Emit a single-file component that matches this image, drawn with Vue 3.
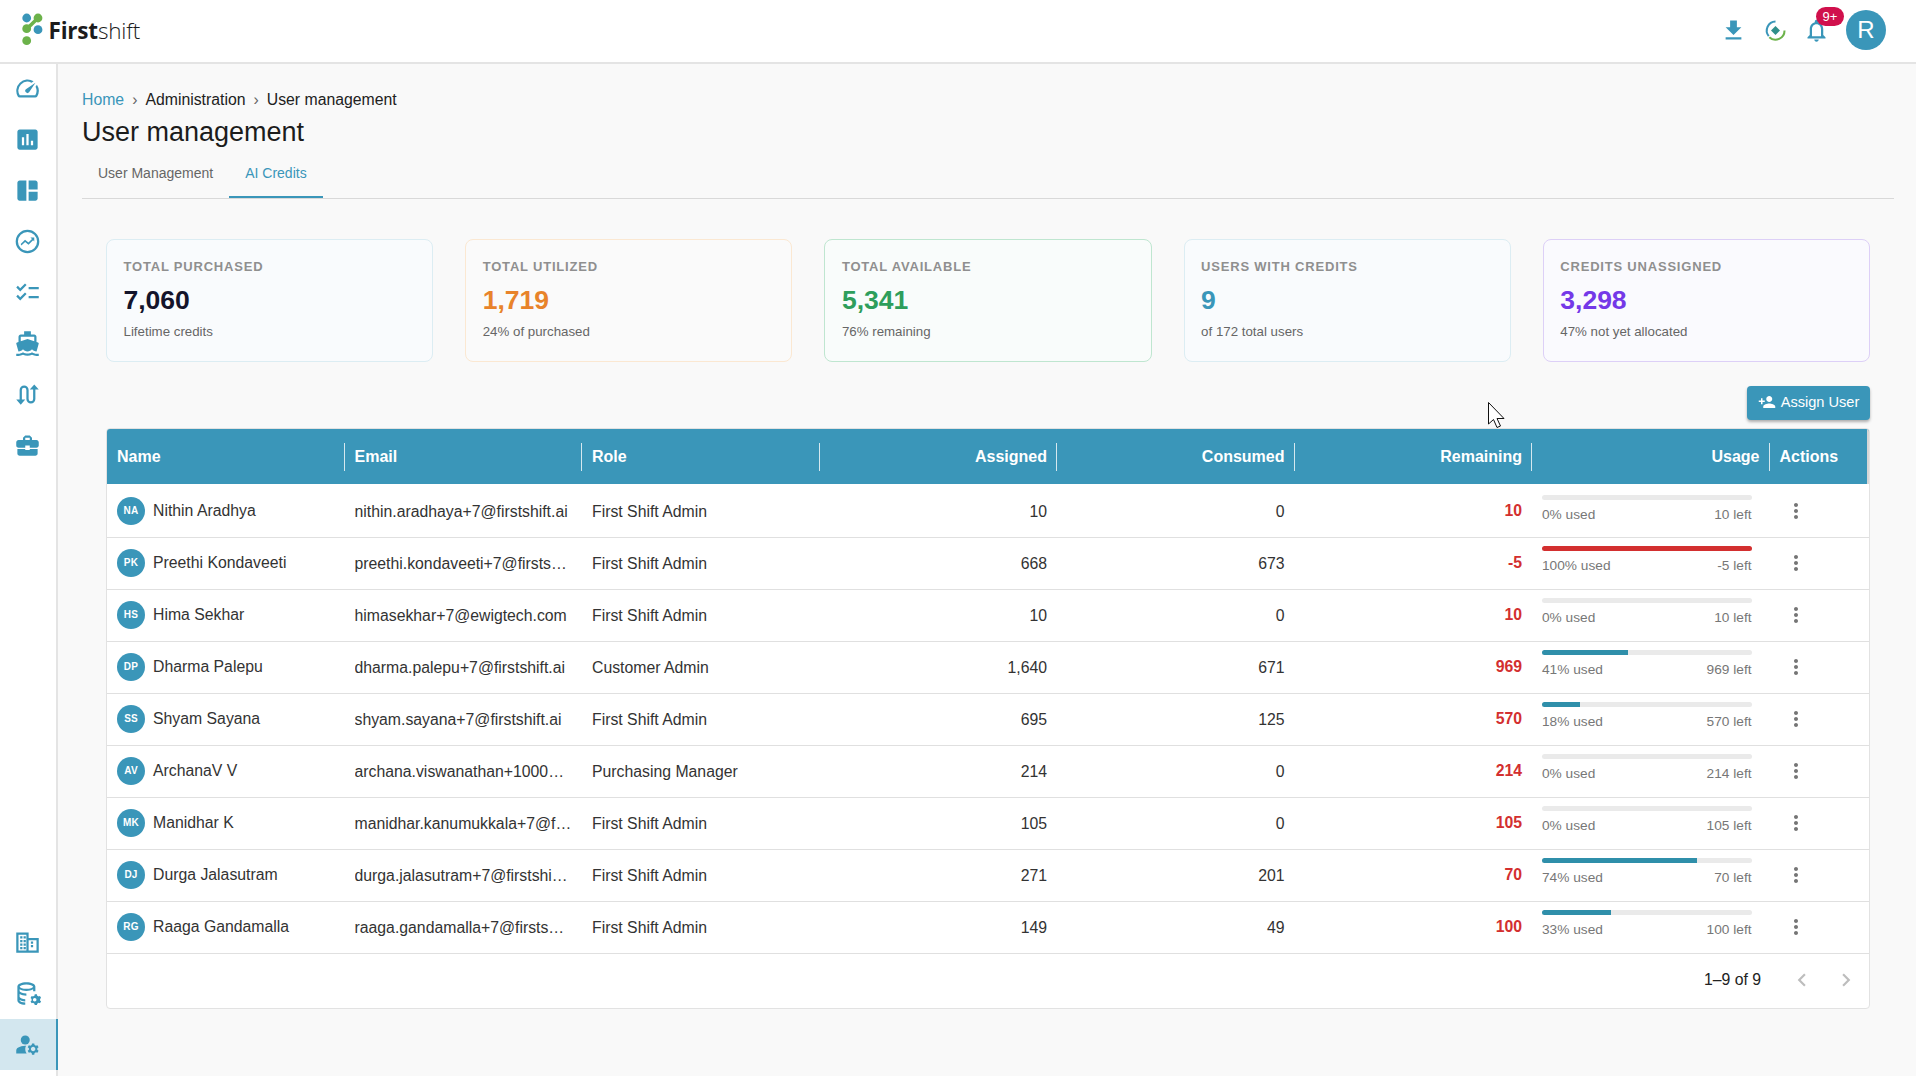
<script setup>
const tabs = ['User Management', 'AI Credits']
const cards = [
  { label: 'Total Purchased', value: '7,060', sub: 'Lifetime credits', tone: 'ink' },
  { label: 'Total Utilized', value: '1,719', sub: '24% of purchased', tone: 'orange' },
  { label: 'Total Available', value: '5,341', sub: '76% remaining', tone: 'green' },
  { label: 'Users with Credits', value: '9', sub: 'of 172 total users', tone: 'blue' },
  { label: 'Credits Unassigned', value: '3,298', sub: '47% not yet allocated', tone: 'purple' },
]
const rows = [
  { i: 'NA', name: 'Nithin Aradhya', email: 'nithin.aradhaya+7@firstshift.ai', role: 'First Shift Admin', assigned: '10', consumed: '0', remaining: '10', pct: 0 },
  { i: 'PK', name: 'Preethi Kondaveeti', email: 'preethi.kondaveeti+7@firstshift.ai', role: 'First Shift Admin', assigned: '668', consumed: '673', remaining: '-5', pct: 100 },
  { i: 'HS', name: 'Hima Sekhar', email: 'himasekhar+7@ewigtech.com', role: 'First Shift Admin', assigned: '10', consumed: '0', remaining: '10', pct: 0 },
  { i: 'DP', name: 'Dharma Palepu', email: 'dharma.palepu+7@firstshift.ai', role: 'Customer Admin', assigned: '1,640', consumed: '671', remaining: '969', pct: 41 },
  { i: 'SS', name: 'Shyam Sayana', email: 'shyam.sayana+7@firstshift.ai', role: 'First Shift Admin', assigned: '695', consumed: '125', remaining: '570', pct: 18 },
  { i: 'AV', name: 'ArchanaV V', email: 'archana.viswanathan+1000@firstshift.ai', role: 'Purchasing Manager', assigned: '214', consumed: '0', remaining: '214', pct: 0 },
  { i: 'MK', name: 'Manidhar K', email: 'manidhar.kanumukkala+7@firstshift.ai', role: 'First Shift Admin', assigned: '105', consumed: '0', remaining: '105', pct: 0 },
  { i: 'DJ', name: 'Durga Jalasutram', email: 'durga.jalasutram+7@firstshift.ai', role: 'First Shift Admin', assigned: '271', consumed: '201', remaining: '70', pct: 74 },
  { i: 'RG', name: 'Raaga Gandamalla', email: 'raaga.gandamalla+7@firstshift.ai', role: 'First Shift Admin', assigned: '149', consumed: '49', remaining: '100', pct: 33 },
]
const cols = [
  { t: 'Name' }, { t: 'Email' }, { t: 'Role' },
  { t: 'Assigned', r: true }, { t: 'Consumed', r: true }, { t: 'Remaining', r: true }, { t: 'Usage', r: true }, { t: 'Actions' },
]
</script>

<template>
  <div class="page">
    <header class="top">
      <div class="brand">
        <svg width="24" height="34" viewBox="0 0 24 34">
          <path d="M17 5 L6 15.700" fill="none" stroke="#6cb24a" stroke-width="3.600"/>
          <circle cx="5.700" cy="5" r="4.400" fill="#3a96b9"/>
          <circle cx="17" cy="5" r="4.400" fill="#6cb24a"/>
          <circle cx="5.700" cy="15.700" r="4.400" fill="#6cb24a"/>
          <circle cx="17" cy="16.700" r="4.400" fill="#3a96b9"/>
          <circle cx="5.700" cy="27.700" r="4.400" fill="#6cb24a"/>
        </svg>
        <span class="word"><b>First</b><span>shift</span></span>
      </div>
      <div class="tools">
        <svg class="t-i dl" viewBox="0 0 24 24"><path fill="#3a96b9" d="M19 9h-4V3H9v6H5l7 7zM5 18v2h14v-2z"/></svg>
        <svg class="t-i sw" viewBox="0 0 24 24">
          <path d="M12 4a8 8 0 0 0-6 13" fill="none" stroke="#3a96b9" stroke-width="1.800"/>
          <path d="M6.500 18a8 8 0 0 0 13.500-6" fill="none" stroke="#6cb24a" stroke-width="1.800"/>
          <path d="M12 8l4 4-4 4-4-4z" fill="#2f8f8a"/>
        </svg>
        <div class="bell">
          <svg viewBox="0 0 24 24"><path fill="#3a96b9" d="M12 22c1.100 0 2-.9 2-2h-4c0 1.100.9 2 2 2m6-6v-5c0-3.070-1.630-5.640-4.500-6.320V4c0-.83-.67-1.500-1.500-1.500s-1.500.67-1.500 1.500v.68C7.640 5.360 6 7.920 6 11v5l-2 2v1h16v-1zm-2 1H8v-6c0-2.480 1.510-4.500 4-4.500s4 2.020 4 4.500z"/></svg>
          <span class="badge">9+</span>
        </div>
        <div class="me">R</div>
      </div>
    </header>

    <div class="body">
      <nav class="side">
        <div class="group">
          <div class="nav"><svg viewBox="0 0 24 24"><path d="M20.380 8.570l-1.230 1.850a8 8 0 0 1-.22 7.580H5.070A8 8 0 0 1 15.580 6.850l1.850-1.230A10 10 0 0 0 3.350 19a2 2 0 0 0 1.720 1h13.850a2 2 0 0 0 1.740-1 10 10 0 0 0-.27-10.440zm-9.790 6.840a2 2 0 0 0 2.830 0l5.660-8.490-8.490 5.660a2 2 0 0 0 0 2.830z"/></svg></div>
          <div class="nav"><svg viewBox="0 0 24 24"><path d="M19 3H5c-1.100 0-2 .9-2 2v14c0 1.100.9 2 2 2h14c1.100 0 2-.9 2-2V5c0-1.100-.9-2-2-2M9 17H7v-7h2zm4 0h-2V7h2zm4 0h-2v-4h2z"/></svg></div>
          <div class="nav"><svg viewBox="0 0 24 24"><path d="M3 5v14c0 1.100.9 2 2 2h6V3H5c-1.100 0-2 .9-2 2m10-2v8h8V5c0-1.100-.9-2-2-2zm0 18h6c1.100 0 2-.9 2-2v-6h-8z"/></svg></div>
          <div class="nav"><svg viewBox="0 0 24 24"><path d="M12 1.500a10.500 10.500 0 1 0 0 21 10.500 10.500 0 0 0 0-21m0 19a8.500 8.500 0 1 1 0-17 8.500 8.500 0 0 1 0 17"/><path d="M6.500 15.500 6 14.200l3.800-3.700 3 2.400L16 9.800l-1.400-1.300H18V12l-1-1.200-4.100 4-3-2.400z"/></svg></div>
          <div class="nav"><svg viewBox="0 0 24 24"><path d="M22 7h-9v2h9zm0 8h-9v2h9zM5.540 11 2 7.460l1.410-1.410 2.120 2.120 4.240-4.240 1.410 1.410zm0 8L2 15.460l1.410-1.410 2.120 2.120 4.240-4.240 1.410 1.410z"/></svg></div>
          <div class="nav"><svg viewBox="0 0 24 24"><path d="M20 21c-1.390 0-2.780-.47-4-1.320-2.440 1.710-5.560 1.710-8 0C6.780 20.530 5.390 21 4 21H2v2h2c1.380 0 2.740-.35 4-.99 2.520 1.290 5.480 1.290 8 0 1.260.65 2.620.99 4 .99h2v-2zM3.950 19H4c1.600 0 3.020-.88 4-2 .98 1.120 2.400 2 4 2s3.020-.88 4-2c.98 1.120 2.400 2 4 2h.05l1.890-6.680c.08-.26.06-.54-.06-.78s-.34-.42-.6-.5L20 10.620V6c0-1.100-.9-2-2-2h-3V1H9v3H6c-1.100 0-2 .9-2 2v4.620l-1.290.42c-.26.08-.48.26-.6.5s-.15.52-.06.78zM6 6h12v3.970L12 8 6 9.970z"/></svg></div>
          <div class="nav"><svg viewBox="0 0 24 24"><path d="M6 21 2 16.500H5V8a4 4 0 0 1 8 0v8a2 2 0 0 0 4 0V7.500h-3L18 3l4 4.500H19V16a4 4 0 0 1-8 0V8a2 2 0 0 0-4 0v8.500h3z"/></svg></div>
          <div class="nav"><svg viewBox="0 0 24 24"><path d="M10 16v-1H3.010L3 19c0 1.110.89 2 2 2h14c1.110 0 2-.89 2-2v-4h-7v1zm10-9h-4.010V5l-2-2h-4l-2 2v2H4c-1.100 0-2 .9-2 2v3c0 1.110.89 2 2 2h6v-2h4v2h6c1.100 0 2-.9 2-2V9c0-1.100-.9-2-2-2m-6 0h-4V5h4z"/></svg></div>
        </div>
        <div class="group">
          <div class="nav"><svg viewBox="0 0 24 24"><path d="M2 3h11v5h9v13H2zM4 5v14h7V5zm9 5v9h7v-9zM5.500 6.500h2v2h-2zm3 0h2v2h-2zm-3 3.200h2v2h-2zm3 0h2v2h-2zm-3 3.200h2v2h-2zm3 0h2v2h-2zm-3 3.100h2v2h-2zm3 0h2v2h-2zm6.500-5h2v2h-2zm0 3.200h2v2h-2z"/></svg></div>
          <div class="nav"><svg viewBox="0 0 24 24"><path d="M11 2c4.400 0 8 1.600 8 3.800V10h-2V8.300C15.400 9.300 13.200 9.800 11 9.800S6.600 9.300 5 8.300V10c.5 1.100 3 2 6 2v2c-2.200 0-4.400-.5-6-1.500V15c.5 1.100 2.600 2 5 2v2c-2 0-3.800-.4-5-1.200v.4c.4 1 2.500 1.800 5 1.800v2c-4.200 0-7-1.600-7-4V5.800C3 3.600 6.600 2 11 2m0 2C7.700 4 5.300 5 5 5.900 5.300 6.800 7.700 7.800 11 7.800s5.700-1 6-1.900C16.700 5 14.300 4 11 4"/><path d="M23.200 17.500c0-.3 0-.5-.1-.7l1-.8-1-1.700-1.200.4c-.4-.3-.8-.6-1.300-.7l-.2-1.300h-2l-.2 1.300c-.5.1-.9.4-1.300.7l-1.200-.4-1 1.700 1 .8c-.1.200-.1.400-.1.700s0 .5.100.7l-1 .8 1 1.700 1.200-.4c.4.300.8.600 1.300.7l.2 1.300h2l.2-1.300c.5-.1.900-.4 1.300-.7l1.200.4 1-1.700-1-.8c.1-.2.1-.4.100-.7m-4.800 1.600a1.600 1.600 0 1 1 0-3.200 1.600 1.600 0 0 1 0 3.200"/></svg></div>
          <div class="nav on"><svg viewBox="0 0 24 24"><circle cx="10" cy="8" r="4"/><path d="M10.670 13.020C10.450 13.010 10.230 13 10 13c-2.420 0-4.680.67-6.610 1.820C2.510 15.340 2 16.320 2 17.350V20h9.260c-.79-1.130-1.260-2.510-1.260-4 0-1.070.25-2.070.67-2.980M20.750 16c0-.22-.03-.42-.06-.63l1.140-1.010-1-1.730-1.450.49c-.32-.27-.68-.48-1.080-.63L18 11h-2l-.3 1.490c-.4.150-.76.360-1.080.63l-1.450-.49-1 1.730 1.140 1.010c-.03.210-.06.410-.06.630s.03.420.06.630l-1.140 1.010 1 1.730 1.450-.49c.32.270.68.480 1.080.63L16 21h2l.3-1.490c.4-.15.760-.36 1.080-.63l1.450.49 1-1.730-1.140-1.010c.03-.21.06-.41.06-.63M17 18c-1.100 0-2-.9-2-2s.9-2 2-2 2 .9 2 2-.9 2-2 2"/></svg></div>
        </div>
      </nav>

      <main class="main">
        <div class="crumbs">
          <span class="link">Home</span><i>›</i><span>Administration</span><i>›</i><span>User management</span>
        </div>
        <h1>User management</h1>
        <div class="tabs">
          <div v-for="(t, n) in tabs" :key="t" class="tab" :class="{ sel: n === 1 }">{{ t }}</div>
        </div>

        <section class="panel">
          <div class="cards">
            <div v-for="c in cards" :key="c.label" class="card" :class="c.tone">
              <div class="lab">{{ c.label }}</div>
              <div class="val">{{ c.value }}</div>
              <div class="sub">{{ c.sub }}</div>
            </div>
          </div>

          <div class="bar">
            <button class="assign">
              <svg width="18" height="18" viewBox="0 0 24 24"><path fill="#fff" d="M15 12c2.210 0 4-1.790 4-4s-1.790-4-4-4-4 1.790-4 4 1.790 4 4 4m-9-2V7H4v3H1v2h3v3h2v-3h3v-2zm9 4c-2.670 0-8 1.340-8 4v2h16v-2c0-2.660-5.330-4-8-4"/></svg>
              Assign User
            </button>
          </div>

          <div class="grid">
            <div class="row head">
              <div v-for="c in cols" :key="c.t" class="hc" :class="{ r: c.r }">{{ c.t }}</div>
            </div>
            <div v-for="r in rows" :key="r.i" class="row item">
              <div class="c who"><span class="av">{{ r.i }}</span><span class="nm">{{ r.name }}</span></div>
              <div class="c"><span class="cut">{{ r.email }}</span></div>
              <div class="c">{{ r.role }}</div>
              <div class="c r">{{ r.assigned }}</div>
              <div class="c r">{{ r.consumed }}</div>
              <div class="c r rem">{{ r.remaining }}</div>
              <div class="c use">
                <div class="track"><div class="fill" :class="{ over: r.pct === 100 }" :style="{ width: r.pct + '%' }"></div></div>
                <div class="meta"><span>{{ r.pct }}% used</span><span>{{ r.remaining }} left</span></div>
              </div>
              <div class="c act">
                <svg width="24" height="24" viewBox="0 0 24 24"><path fill="#757575" d="M12 8c1.100 0 2-.9 2-2s-.9-2-2-2-2 .9-2 2 .9 2 2 2m0 2c-1.100 0-2 .9-2 2s.9 2 2 2 2-.9 2-2-.9-2-2-2m0 6c-1.100 0-2 .9-2 2s.9 2 2 2 2-.9 2-2-.9-2-2-2"/></svg>
              </div>
            </div>
            <div class="foot">
              <span class="count">1–9 of 9</span>
              <svg viewBox="0 0 24 24"><path fill="#bdbdbd" d="M15.410 7.410 14 6l-6 6 6 6 1.410-1.410L10.830 12z"/></svg>
              <svg viewBox="0 0 24 24"><path fill="#bdbdbd" d="M10 6 8.590 7.410 13.170 12l-4.580 4.590L10 18l6-6z"/></svg>
            </div>
          </div>
        </section>

        <svg class="cursor" width="20" height="30" viewBox="0 0 20 30"><path d="M1.500 1.500V23l5-4.500 3.500 8 3.500-1.500-3.500-7.500H17z" fill="#fff" stroke="#111" stroke-width="1"/></svg>
      </main>
    </div>
  </div>
</template>

<style>
html, body { margin: 0; background: #fff; }
</style>

<style scoped>
.page { width: 1916px; height: 1076px; display: flex; flex-direction: column; overflow: hidden; font-family: "Liberation Sans", Arial, sans-serif; color: #212121; }
.top { height: 64px; flex: none; box-sizing: border-box; background: #fff; border-bottom: 2px solid #e4e4e4; display: flex; align-items: center; justify-content: space-between; padding: 0 30px 2px 21px; }
.brand { display: flex; align-items: center; gap: 3.500px; }
.word { font-family: "Open Sans", sans-serif; font-size: 22.500px; letter-spacing: -0.2px; color: #1c1c1c; }
.word b { font-weight: 700; }
.word span { font-weight: 300; }
.tools { display: flex; align-items: center; }
.t-i { width: 27px; height: 27px; }
.dl { margin-right: 15.500px; }
.sw { margin-right: 13.500px; }
.bell { position: relative; display: flex; margin-right: 16.500px; }
.bell svg { width: 27px; height: 27px; }
.badge { position: absolute; top: -9.500px; left: 13.500px; background: #d0104c; color: #fff; font-size: 13px; line-height: 19px; height: 19px; padding: 0 6.500px; border-radius: 10px; }
.me { width: 40px; height: 40px; border-radius: 50%; background: #3a96b9; color: #fff; font-size: 24px; display: flex; align-items: center; justify-content: center; }
.body { flex: 1; display: flex; min-height: 0; }
.side { width: 58px; flex: none; box-sizing: border-box; background: #fff; border-right: 2px solid #e4e4e4; display: flex; flex-direction: column; justify-content: space-between; padding: 0 0 6px; }
.group:first-child { margin-top: -1.500px; }
.nav { height: 51px; display: flex; align-items: center; justify-content: center; padding-right: 1px; }
.nav svg { width: 27px; height: 27px; fill: #3a96b9; }
.nav.on { background: #d3e7ef; box-shadow: inset -2px 0 0 #3a96b9; margin-right: -2px; padding-right: 3px; }
.main { flex: 1; position: relative; background: #f9f9f9; padding: 26px 22px 0 24px; min-width: 0; }
.crumbs { font-size: 15.800px; line-height: 20px; display: flex; align-items: center; }
.crumbs i { font-style: normal; color: #666; margin: 0 8px; }
.link { color: #3a96b9; }
h1 { margin: 2px 0 0; font-size: 27px; font-weight: 400; line-height: 40px; color: #1c1c1c; }
.tabs { display: flex; border-bottom: 1px solid #d9d9d9; height: 46px; }
.tab { padding: 0 16px; font-size: 14px; line-height: 42px; color: #666; height: 46px; box-sizing: border-box; }
.tab.sel { color: #3a96b9; border-bottom: 2px solid #3a96b9; }
.panel { padding: 40px 24px 0; }
.cards { display: grid; grid-template-columns: repeat(5, 1fr); gap: 32px; }
.card { height: 123px; box-sizing: border-box; border-radius: 8px; border: 1px solid #dcedf3; background: #f9fbfd; padding: 18px 16.500px 0; }
.card.orange { border-color: #fbe8d2; background: #fafafa; }
.card.green { border-color: #bfe6d0; background: #f9fcfb; }
.card.blue { border-color: #dcedf3; }
.card.purple { border-color: #ddd0f7; background: #fafafe; }
.lab { font-size: 13px; line-height: 18px; font-weight: 700; text-transform: uppercase; letter-spacing: 0.8px; color: #8f8f8f; }
.val { font-size: 26.500px; line-height: 36px; font-weight: 700; margin-top: 6px; color: #14142b; }
.orange .val { color: #e8832a; }
.green .val { color: #2e9e5b; }
.blue .val { color: #3a96b9; }
.purple .val { color: #7438e8; }
.sub { font-size: 13.300px; line-height: 20px; color: #666; margin-top: 4px; }
.bar { display: flex; justify-content: flex-end; margin-top: 24px; }
.assign { height: 34px; width: 123px; border: 0; border-radius: 4px; background: #3a96b9; color: #fff; font: 14.600px "Liberation Sans", Arial, sans-serif; display: flex; align-items: center; justify-content: center; gap: 5px; box-shadow: 0 2px 3px rgba(0,0,0,.3); padding: 0 0 2px; }
.grid { margin-top: 8px; border: 1px solid #e2e2e2; border-radius: 4px; background: #fff; overflow: hidden; }
.row { display: grid; grid-template-columns: repeat(7, 237.500px) 1fr; }
.head { height: 55px; background: #3a96b9; color: #fff; align-items: center; box-shadow: inset -2px 0 0 #d6d6d6; }
.hc { font-size: 16px; font-weight: 700; padding: 0 10px; height: 28px; line-height: 27px; border-right: 1px solid #d5e8ef; box-sizing: border-box; }
.hc.r { padding-right: 9px; }
.hc:last-child { border: 0; }
.r { text-align: right; }
.item { height: 52px; box-sizing: border-box; border-bottom: 1px solid #e0e0e0; font-size: 15.800px; align-items: center; color: #333; }
.head + .item { height: 53px; margin-top: 1px; padding-top: 1px; }
.c { padding: 0 10px; min-width: 0; }
.who { display: flex; align-items: center; gap: 8px; }
.av { width: 28px; height: 28px; margin-top: -2px; border-radius: 50%; background: #3a96b9; color: #fff; font-size: 10px; font-weight: 700; display: flex; align-items: center; justify-content: center; letter-spacing: .2px; flex: none; }
.nm { margin-top: -2px; }
.cut { display: block; overflow: hidden; text-overflow: ellipsis; white-space: nowrap; }
.rem { font-weight: 700; color: #d32f2f; margin-top: -1px; }
.use { align-self: start; padding: 8px 18px 0 10px; }
.head + .item .use { padding-top: 9px; }
.track { height: 5px; border-radius: 3px; background: #eaeaea; overflow: hidden; }
.fill { height: 5px; background: #2f8faa; }
.fill.over { background: #d32f2f; }
.meta { display: flex; justify-content: space-between; font-size: 13.700px; line-height: 18px; color: #777; margin-top: 5.500px; }
.act { display: flex; padding: 0 0 0 14px; margin-top: -1px; }
.foot { height: 54px; display: flex; align-items: center; justify-content: flex-end; padding: 0 10px 2px 0; box-sizing: border-box; gap: 18px; }
.count { font-size: 15.800px; color: #222; margin-right: 10px; }
.foot svg { width: 26px; height: 26px; }
.cursor { position: absolute; left: 1429px; top: 337px; }
</style>
